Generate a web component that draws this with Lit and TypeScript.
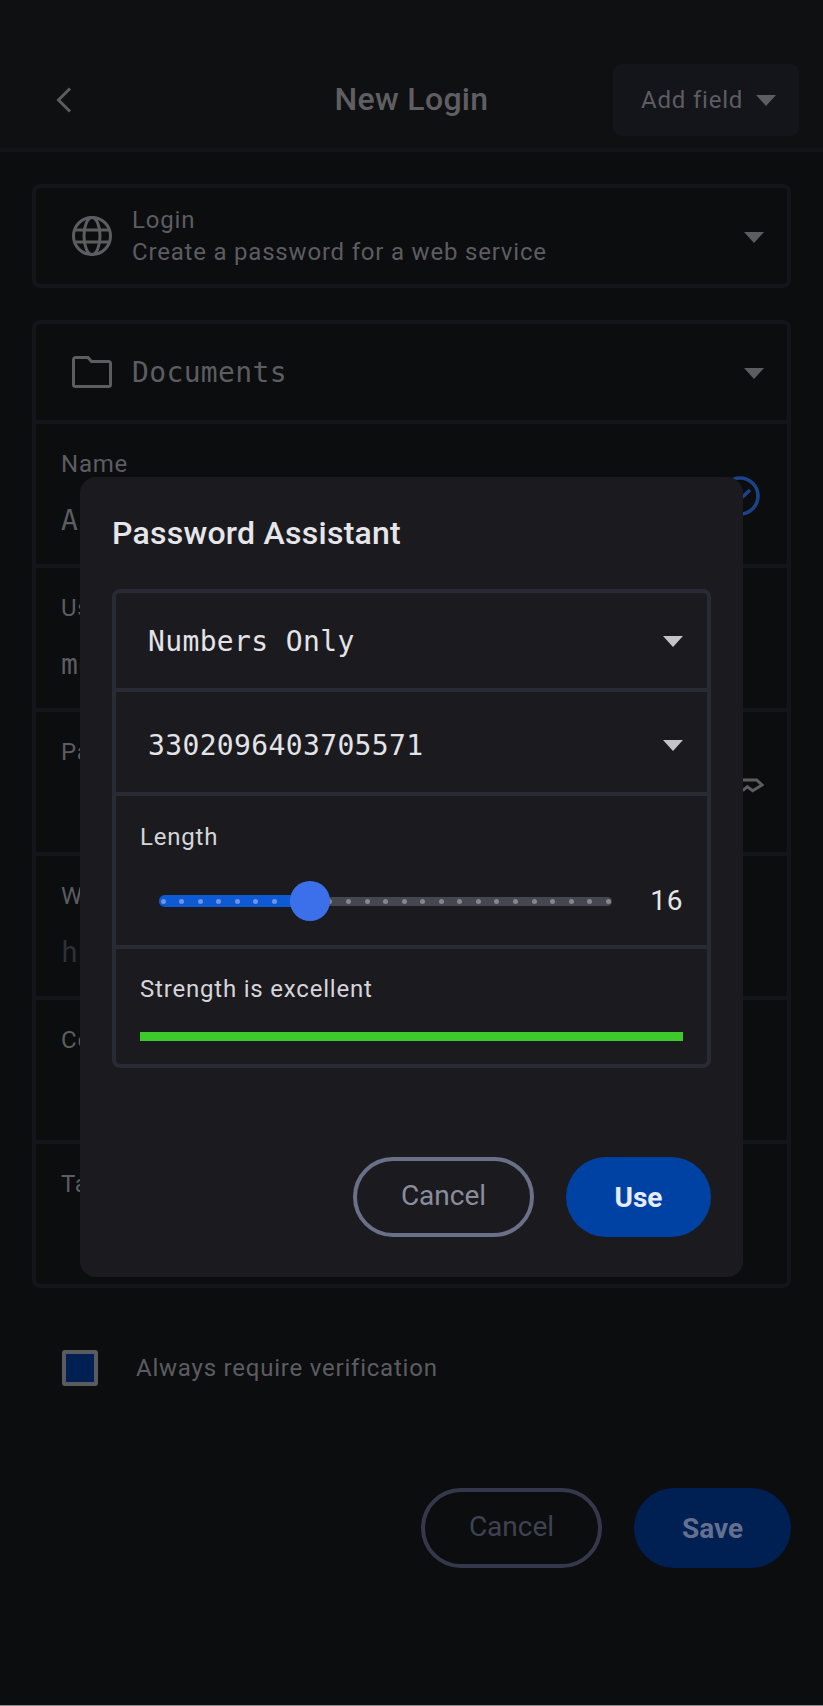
import { LitElement, html, css, svg } from 'lit';
import { customElement } from 'lit/decorators.js';

const arrow = (color: string) => html`
  <svg class="arrow" width="20" height="11" viewBox="0 0 20 11"><path d="M0 0h20L10 11z" fill=${color}></path></svg>
`;

const globe = svg`
  <circle cx="20" cy="20" r="18.5"></circle>
  <ellipse cx="20" cy="20" rx="8" ry="18.5"></ellipse>
  <path d="M3.5 14h33M3.5 26h33"></path>
`;

const folder = svg`
  <path d="M1.5 3.5a2 2 0 0 1 2-2H16l3.5 4h17a2 2 0 0 1 2 2v21a2 2 0 0 1-2 2h-33a2 2 0 0 1-2-2z"></path>
`;

const fields = [
  { label: 'Name', value: 'Apple', mono: true },
  { label: 'Username', value: 'me@example.com', mono: true },
  { label: 'Password', value: '', mono: true },
  { label: 'Website', value: 'https://', mono: true, faint: true },
  { label: 'Comments', value: '', mono: false },
  { label: 'Tags', value: '', mono: false },
];

const TICKS = 25;
const VALUE_TICK = 8;
const TICK_GAP = 18.55;

@customElement('app-root')
export class AppRoot extends LitElement {
  static styles = css`
    :host {
      display: block;
      position: relative;
      height: 1706px;
      overflow: hidden;
      background: #0c0d0f;
      font-family: Roboto, sans-serif;
      color: #5c5c61;
    }

    * {
      box-sizing: border-box;
    }

    .header {
      display: flex;
      align-items: center;
      justify-content: space-between;
      position: relative;
      height: 152px;
      padding: 52px 24px 0 56px;
      background: #0f1012;
      border-bottom: 4px solid #131417;
    }

    .back {
      display: block;
    }

    .title {
      position: absolute;
      left: 0;
      right: 0;
      top: 79px;
      text-align: center;
      font-size: 32px;
      line-height: 40px;
      font-weight: 500;
      letter-spacing: 0.3px;
      color: #5f5f63;
    }

    .add {
      display: flex;
      align-items: center;
      gap: 13px;
      width: 186px;
      height: 72px;
      padding-left: 28px;
      border-radius: 8px;
      background: #14151a;
      font-size: 24px;
      letter-spacing: 0.8px;
    }

    .main {
      padding: 32px 32px 0;
    }

    .card {
      border: 4px solid #14151a;
      border-radius: 8px;
    }

    .card + .card {
      margin-top: 32px;
    }

    .picker {
      display: flex;
      align-items: center;
      height: 96px;
      padding: 0 23px 0 36px;
      gap: 20px;
    }

    .picker svg.icon {
      flex: none;
      fill: none;
      stroke: #5c5c61;
      stroke-width: 3;
    }

    .picker .arrow {
      margin-left: auto;
      margin-top: 2px;
    }

    .login-text {
      font-size: 24px;
      line-height: 32px;
      letter-spacing: 0.8px;
    }

    .mono {
      font-family: 'DejaVu Sans Mono', monospace;
      font-size: 28px;
      letter-spacing: 0.36px;
    }

    .row {
      position: relative;
      height: 144px;
      padding: 24px 25px;
      border-top: 4px solid #14151a;
    }

    .row .label {
      font-size: 24px;
      line-height: 32px;
      letter-spacing: 0.8px;
      margin-bottom: 21px;
    }

    .row .value {
      font-size: 28px;
      line-height: 40px;
    }

    .row .faint {
      color: #303136;
    }

    .verify {
      position: absolute;
      right: 27px;
      top: 52px;
    }

    .wand {
      position: absolute;
      right: 23px;
      top: 65px;
    }

    .check {
      display: flex;
      align-items: center;
      gap: 38px;
      margin-top: 62px;
      padding-left: 30px;
      font-size: 24px;
      letter-spacing: 0.78px;
    }

    .box {
      width: 36px;
      height: 36px;
      border: 4px solid #5a5b60;
      border-radius: 3px;
      background: #001f52;
    }

    .actions {
      display: flex;
      justify-content: flex-end;
      gap: 32px;
    }

    .main .actions {
      margin-top: 102px;
    }

    .btn {
      display: flex;
      align-items: center;
      justify-content: center;
      height: 80px;
      border-radius: 40px;
      font-size: 28px;
      padding: 0 44px;
    }

    .outline {
      width: 181px;
      padding-bottom: 4px;
      border: 4px solid #35374a;
      color: #3f4250;
    }

    .save {
      width: 157px;
      background: #001f52;
      color: #63718f;
      font-weight: 700;
    }

    .scrim {
      position: absolute;
      inset: 0;
      display: flex;
      justify-content: center;
      align-items: flex-start;
      padding-top: 477px;
    }

    .modal {
      width: 663px;
      height: 800px;
      padding: 32px;
      border-radius: 16px;
      background: #1b1b1f;
      color: #e3e3e8;
    }

    .modal h2 {
      margin: 0 0 32px;
      font-size: 32px;
      line-height: 48px;
      font-weight: 500;
      letter-spacing: 0.25px;
      color: #e6e6ea;
    }

    .inner {
      border: 4px solid #282b33;
      border-radius: 8px;
    }

    .inner > div + div {
      border-top: 4px solid #282b33;
    }

    .select {
      display: flex;
      align-items: center;
      justify-content: space-between;
      padding: 2px 24px 0 32px;
      color: #e3e3e8;
    }

    .select.first {
      height: 95px;
    }

    .select.second {
      height: 104px;
      padding-top: 6px;
    }

    .section {
      padding: 25px 24px 0;
      font-size: 24px;
      line-height: 32px;
      letter-spacing: 0.8px;
      color: #d5d5da;
    }

    .section.length {
      height: 153px;
    }

    .section.strength {
      height: 119px;
      padding-top: 24px;
    }

    .slider-row {
      display: flex;
      align-items: center;
      justify-content: space-between;
      margin-top: 28px;
    }

    .slider {
      position: relative;
      width: 453px;
      height: 40px;
      margin-left: 19px;
    }

    .track {
      position: absolute;
      left: 0;
      right: 0;
      top: 15.5px;
      height: 9px;
      border-radius: 4.5px;
      background: #46464e;
    }

    .active {
      position: absolute;
      left: 0;
      top: 14px;
      width: 152px;
      height: 12px;
      border-radius: 6px 0 0 6px;
      background: #0e5ad4;
    }

    .tick {
      position: absolute;
      top: 17.5px;
      width: 5px;
      height: 5px;
      border-radius: 50%;
      background: #86868e;
    }

    .tick.on {
      background: #6d94e6;
    }

    .thumb {
      position: absolute;
      top: 0;
      left: 131px;
      width: 40px;
      height: 40px;
      border-radius: 50%;
      background: #3b70ea;
    }

    .count {
      font-size: 28px;
      letter-spacing: 0.6px;
      color: #e6e6ea;
    }

    .bar {
      height: 9px;
      margin-top: 27px;
      background: #3ccb2a;
    }

    .modal .actions {
      margin-top: 89px;
    }

    .modal .outline {
      width: 181px;
      border-color: #6b7089;
      color: #8a8d9c;
    }

    .use {
      width: 145px;
      background: #0042a4;
      color: #e6ecff;
      font-weight: 700;
    }

    .edge {
      position: absolute;
      left: 0;
      right: 0;
      bottom: 0;
      height: 1px;
      background: #8a8a8a;
    }
  `;

  private ticks() {
    const items = [];
    for (let i = 0; i < TICKS; i++) {
      items.push(html`
        <span class="tick ${i < VALUE_TICK ? 'on' : ''}" style="left: ${1.5 + i * TICK_GAP}px"></span>
      `);
    }
    return items;
  }

  render() {
    return html`
      <div class="header">
        <svg class="back" width="16" height="26" viewBox="0 0 16 26" fill="none" stroke="#5c5c61" stroke-width="3">
          <path d="M14 1.5 2.5 13 14 24.5"></path>
        </svg>
        <div class="title">New Login</div>
        <div class="add">Add field ${arrow('#5c5c61')}</div>
      </div>

      <div class="main">
        <div class="card">
          <div class="picker">
            <svg class="icon" width="40" height="40" viewBox="0 0 40 40">${globe}</svg>
            <div class="login-text">
              <div>Login</div>
              <div>Create a password for a web service</div>
            </div>
            ${arrow('#5c5c61')}
          </div>
        </div>

        <div class="card">
          <div class="picker">
            <svg class="icon" width="40" height="32" viewBox="0 0 40 32">${folder}</svg>
            <div class="mono">Documents</div>
            ${arrow('#5c5c61')}
          </div>
          ${fields.map((f) => html`
            <div class="row">
              <div class="label">${f.label}</div>
              <div class="value ${f.mono ? 'mono' : ''} ${f.faint ? 'faint' : ''}">${f.value}</div>
              ${f.label === 'Name' ? html`
                <svg class="verify" width="40" height="40" viewBox="0 0 40 40" fill="none" stroke="#1c4389" stroke-width="3.5">
                  <circle cx="20" cy="20" r="18"></circle>
                  <path d="M11 20l6 6 13-12"></path>
                </svg>
              ` : ''}
              ${f.label === 'Password' ? html`
                <svg class="wand" width="24" height="16" viewBox="0 0 24 16" fill="none" stroke="#5c5c61" stroke-width="3">
                  <path d="M2 3h14.7L22 8l-9.3 5.7-5.4-4-4.6 4"></path>
                </svg>
              ` : ''}
            </div>
          `)}
        </div>

        <div class="check">
          <div class="box"></div>
          <span>Always require verification</span>
        </div>

        <div class="actions">
          <div class="btn outline">Cancel</div>
          <div class="btn save">Save</div>
        </div>
      </div>

      <div class="scrim">
        <div class="modal">
          <h2>Password Assistant</h2>
          <div class="inner">
            <div class="select first mono">Numbers Only ${arrow('#c4c4c8')}</div>
            <div class="select second mono">3302096403705571 ${arrow('#c4c4c8')}</div>
            <div class="section length">
              Length
              <div class="slider-row">
                <div class="slider">
                  <div class="track"></div>
                  <div class="active"></div>
                  ${this.ticks()}
                  <div class="thumb"></div>
                </div>
                <span class="count">16</span>
              </div>
            </div>
            <div class="section strength">
              Strength is excellent
              <div class="bar"></div>
            </div>
          </div>
          <div class="actions">
            <div class="btn outline">Cancel</div>
            <div class="btn use">Use</div>
          </div>
        </div>
      </div>

      <div class="edge"></div>
    `;
  }
}
